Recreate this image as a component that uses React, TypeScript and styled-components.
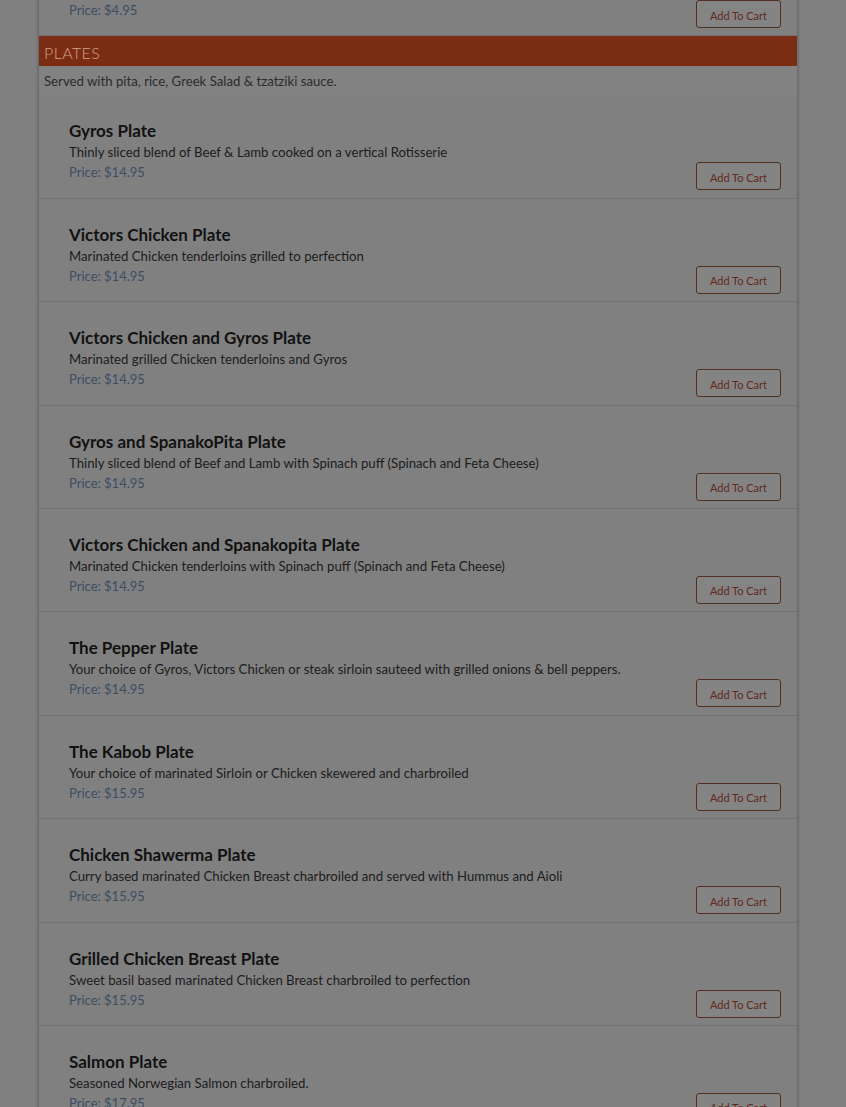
import React from "react";
import styled, { createGlobalStyle } from "styled-components";

type Item = {
  name: string;
  description: string;
  price: string;
};

const GlobalStyle = createGlobalStyle`
  html, body {
    margin: 0;
    padding: 0;
    background: #808080;
    font-family: "Lato", "Liberation Sans", sans-serif;
    overflow: hidden;
  }
`;

const Page = styled.div`
  padding: 0 48px 0 38px;
`;

const Card = styled.div`
  margin-top: -67px;
  background: #808080;
  border-left: 1px solid #6c6c6c;
  border-right: 1px solid #6c6c6c;
  box-shadow: 0 0 3px rgba(0, 0, 0, 0.25);
`;

const SectionHeader = styled.div`
  background: #7a2d12;
  height: 30px;
  display: flex;
  align-items: center;
  padding: 2px 5px 0;
  box-sizing: border-box;
  color: #d3a08b;
  font-size: 16px;
  font-weight: 300;
  letter-spacing: 0.4px;
  text-transform: uppercase;
`;

const SectionNote = styled.div`
  height: 29px;
  display: flex;
  align-items: center;
  padding: 0 5px;
  font-size: 13.2px;
  color: #2c2c2c;
  background: #828282;
`;

const Row = styled.div`
  display: flex;
  justify-content: space-between;
  align-items: flex-end;
  padding: 25px 16px 7.4px 30px;
  border-bottom: 1px solid #737373;
`;

const Info = styled.div`
  display: flex;
  flex-direction: column;
  padding-bottom: 8px;
`;

const Title = styled.div`
  font-size: 17px;
  font-weight: 700;
  line-height: 22px;
  color: #121212;
`;

const Description = styled.div`
  font-size: 13.2px;
  line-height: 20px;
  color: #1c1c1c;
`;

const Price = styled.div`
  font-size: 13px;
  line-height: 20px;
  color: #3c4e62;
`;

const CartButton = styled.button`
  width: 85px;
  height: 28px;
  padding: 2px 0 0;
  border: 1px solid #52301f;
  border-radius: 3px;
  background: #848484;
  color: #62291a;
  font-family: inherit;
  font-size: 11px;
  cursor: pointer;
`;

const previous: Item = {
  name: "Baklava",
  description: "Layers of phyllo with walnuts and honey",
  price: "$4.95",
};

const plates: Item[] = [
  {
    name: "Gyros Plate",
    description: "Thinly sliced blend of Beef & Lamb cooked on a vertical Rotisserie",
    price: "$14.95",
  },
  {
    name: "Victors Chicken Plate",
    description: "Marinated Chicken tenderloins grilled to perfection",
    price: "$14.95",
  },
  {
    name: "Victors Chicken and Gyros Plate",
    description: "Marinated grilled Chicken tenderloins and Gyros",
    price: "$14.95",
  },
  {
    name: "Gyros and SpanakoPita Plate",
    description: "Thinly sliced blend of Beef and Lamb with Spinach puff (Spinach and Feta Cheese)",
    price: "$14.95",
  },
  {
    name: "Victors Chicken and Spanakopita Plate",
    description: "Marinated Chicken tenderloins with Spinach puff (Spinach and Feta Cheese)",
    price: "$14.95",
  },
  {
    name: "The Pepper Plate",
    description:
      "Your choice of Gyros, Victors Chicken or steak sirloin sauteed with grilled onions & bell peppers.",
    price: "$14.95",
  },
  {
    name: "The Kabob Plate",
    description: "Your choice of marinated Sirloin or Chicken skewered and charbroiled",
    price: "$15.95",
  },
  {
    name: "Chicken Shawerma Plate",
    description: "Curry based marinated Chicken Breast charbroiled and served with Hummus and Aioli",
    price: "$15.95",
  },
  {
    name: "Grilled Chicken Breast Plate",
    description: "Sweet basil based marinated Chicken Breast charbroiled to perfection",
    price: "$15.95",
  },
  {
    name: "Salmon Plate",
    description: "Seasoned Norwegian Salmon charbroiled.",
    price: "$17.95",
  },
];

const MenuRow = ({ item }: { item: Item }) => (
  <Row>
    <Info>
      <Title>{item.name}</Title>
      <Description>{item.description}</Description>
      <Price>Price: {item.price}</Price>
    </Info>
    <CartButton>Add To Cart</CartButton>
  </Row>
);

export default function App() {
  return (
    <>
      <GlobalStyle />
      <Page>
        <Card>
          <MenuRow item={previous} />
          <SectionHeader>Plates</SectionHeader>
          <SectionNote>Served with pita, rice, Greek Salad &amp; tzatziki sauce.</SectionNote>
          {plates.map((item) => (
            <MenuRow key={item.name} item={item} />
          ))}
        </Card>
      </Page>
    </>
  );
}
